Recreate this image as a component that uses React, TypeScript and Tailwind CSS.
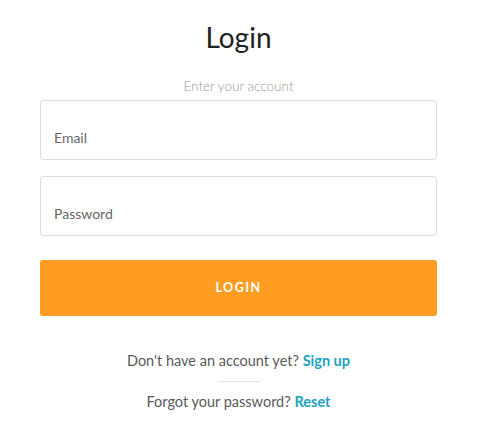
export default function App() {
  return (
    <div className="min-h-[447px] w-full bg-white font-['Lato','Noto_Sans',sans-serif]">
      <div className="ml-[40px] w-[397px] pt-[17px]">
        <h1 className="text-center text-[28px] leading-[40px] text-[#222]">Login</h1>

        <p className="mt-[21px] text-center text-[13.5px] leading-[16px] font-light text-[#9a9a9a]">
          Enter your account
        </p>

        <form className="mt-[6px]" onSubmit={(e) => e.preventDefault()}>
          <input
            type="email"
            placeholder="Email"
            className="block h-[60px] w-full rounded-[3px] border border-[#d9dfe3] px-[13px] pt-[15px] text-[14px] text-[#333] outline-none placeholder:text-[#666]"
          />
          <input
            type="password"
            placeholder="Password"
            className="mt-[16px] block h-[60px] w-full rounded-[3px] border border-[#d9dfe3] px-[13px] pt-[15px] text-[14px] text-[#333] outline-none placeholder:text-[#666]"
          />
          <button
            type="submit"
            className="mt-[24px] block h-[56px] w-full rounded-[3px] bg-[#ff9d22] text-[12.5px] font-bold tracking-[0.12em] text-white"
          >
            LOGIN
          </button>
        </form>

        <p className="mt-[35px] text-center text-[14.5px] leading-[20px] text-[#5a5a5a]">
          Don't have an account yet?{" "}
          <a href="#" className="font-bold text-[#1ba3c1]">
            Sign up
          </a>
        </p>
        <div className="mx-auto my-[10px] h-px w-[42px] bg-[#e2e2e2]" />
        <p className="text-center text-[14.5px] leading-[20px] text-[#5a5a5a]">
          Forgot your password?{" "}
          <a href="#" className="font-bold text-[#1ba3c1]">
            Reset
          </a>
        </p>
      </div>
    </div>
  );
}
